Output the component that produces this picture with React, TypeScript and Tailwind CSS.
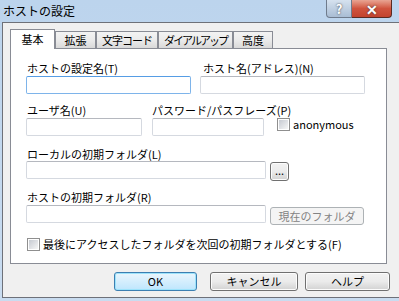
import React from "react";

const font = { fontFamily: '"Noto Sans CJK JP", "Liberation Sans", sans-serif' };

const tabs = [
  { label: "基本", w: "w-[45px]", t: "" },
  { label: "拡張", w: "w-[41px]", t: "" },
  { label: "文字コード", w: "w-[62px]", t: "tracking-[-1px]" },
  { label: "ダイアルアップ", w: "w-[75px]", t: "tracking-[-2px]" },
  { label: "高度", w: "w-[40px]", t: "" },
];

function Field({ className = "", focused = false }: { className?: string; focused?: boolean }) {
  return (
    <div
      className={
        "h-[18px] rounded-[2px] border bg-white " +
        (focused ? "border-[#7eb4ea] border-t-[#569de5]" : "border-[#d5d9e0] border-t-[#b5b8bf]") +
        " " +
        className
      }
    />
  );
}

function Check({ label }: { label: string }) {
  return (
    <div className="flex items-center gap-[3px] whitespace-nowrap">
      <div className="flex h-[13px] w-[13px] shrink-0 items-center justify-center border border-[#8f8f8f] bg-white">
        <div className="h-[9px] w-[9px] bg-gradient-to-br from-[#c6cad1] to-[#f6f6f6]" />
      </div>
      <span className="text-[11px] leading-[13px] text-black">{label}</span>
    </div>
  );
}

function Button({
  children,
  className = "",
  primary = false,
  disabled = false,
}: {
  children: React.ReactNode;
  className?: string;
  primary?: boolean;
  disabled?: boolean;
}) {
  return (
    <div
      className={
        "flex items-center justify-center whitespace-nowrap rounded-[3px] border text-[11px] " +
        (primary
          ? "border-[#3c7fb1] bg-gradient-to-b from-[#eaf6fd] to-[#bee6fd] text-black shadow-[inset_0_0_0_1px_#9de3fb] "
          : disabled
            ? "border-[#adb2b5] bg-[#f4f4f4] text-[#838383] "
            : "border-[#707070] bg-gradient-to-b from-[#f2f2f2] via-[#ebebeb] to-[#d2d2d2] text-black shadow-[inset_0_0_0_1px_#fcfcfc] ") +
        className
      }
    >
      {children}
    </div>
  );
}

export default function App() {
  return (
    <div
      className="flex h-[301px] w-[399px] flex-col overflow-hidden bg-gradient-to-b from-[#bcd4ed] to-[#c9dcf0]"
      style={font}
    >
      {/* title bar */}
      <div className="flex h-[22px] shrink-0 items-start justify-between">
        <span className="pl-[3px] pt-[3px] text-[12px] leading-[15px] text-black">ホストの設定</span>
        <div className="mr-[7px] flex">
          <div className="flex h-[18px] w-[26px] items-center justify-center rounded-bl-[4px] border border-t-0 border-[#6f7b8c] bg-gradient-to-b from-[#d6e2ef] to-[#a9bdd4] text-[13px] font-bold leading-none text-white [text-shadow:0_0_2px_#333]">
            ?
          </div>
          <div className="flex h-[18px] w-[40px] items-center justify-center rounded-br-[4px] border border-l-0 border-t-0 border-[#5a2a22] bg-gradient-to-b from-[#e8a493] via-[#d0533e] to-[#c2432e] text-[14px] font-bold leading-none text-white [text-shadow:0_0_2px_#333]">
            ✕
          </div>
        </div>
      </div>

      {/* client */}
      <div className="ml-[2px] flex h-[276px] flex-col border-b border-l border-t border-[#6e7179] bg-[#f0f0f0] pl-[7px]">
        {/* tabs */}
        <div className="mt-[7px] flex h-[18px] items-end">
          {tabs.map((t, i) =>
            i === 0 ? (
              <div
                key={t.label}
                className={
                  "relative z-10 -mb-px flex h-[20px] shrink-0 items-start justify-center border border-b-0 border-[#898c95] bg-white pt-[2px] text-[11px] leading-[14px] text-black " +
                  t.w
                }
              >
                {t.label}
              </div>
            ) : (
              <div
                key={t.label}
                className={
                  "flex h-[17px] min-w-0 shrink-0 items-center justify-center overflow-hidden whitespace-nowrap border border-b-0 border-[#898c95] bg-gradient-to-b from-[#f3f3f3] via-[#ebebeb] to-[#d9d9d9] text-[11px] leading-[14px] text-black " +
                  t.w +
                  " " +
                  t.t
                }
              >
                {t.label}
              </div>
            )
          )}
        </div>

        {/* panel */}
        <div className="flex h-[216px] w-[377px] flex-col whitespace-nowrap border border-[#898c95] bg-white pl-[15px] pt-[12px] text-[11px] leading-[14px] text-black">
          <div className="flex">
            <div className="w-[174px]">
              <div className="h-[15px] pl-[1px]">ホストの設定名(T)</div>
              <Field focused className="w-[165px]" />
            </div>
            <div className="w-[165px]">
              <div className="h-[15px] pl-[3px]">ホスト名(アドレス)(N)</div>
              <Field className="w-[165px]" />
            </div>
          </div>

          <div className="mt-[9px] flex">
            <div className="w-[126px]">
              <div className="h-[15px] pl-[1px]">ユーザ名(U)</div>
              <Field className="w-[116px]" />
            </div>
            <div className="w-[125px]">
              <div className="h-[15px]">パスワード/パスフレーズ(P)</div>
              <Field className="w-[112px]" />
            </div>
            <div className="pt-[15px]">
              <Check label="anonymous" />
            </div>
          </div>

          <div className="mt-[11px]">
            <div className="h-[14px] pl-[1px]">ローカルの初期フォルダ(L)</div>
            <div className="flex items-start gap-[4px]">
              <Field className="w-[240px]" />
              <Button className="mt-[1px] h-[19px] w-[19px] pb-[4px]">...</Button>
            </div>
          </div>

          <div className="mt-[9px]">
            <div className="h-[15px] pl-[1px]">ホストの初期フォルダ(R)</div>
            <div className="flex items-start gap-[4px]">
              <Field className="w-[240px]" />
              <Button disabled className="mt-[2px] h-[18px] w-[94px]">
                現在のフォルダ
              </Button>
            </div>
          </div>

          <div className="mt-[13px] pl-[1px]">
            <Check label="最後にアクセスしたフォルダを次回の初期フォルダとする(F)" />
          </div>
        </div>

        {/* buttons */}
        <div className="mt-[8px] flex pl-[104px]">
          <Button primary className="h-[19px] w-[83px]">
            OK
          </Button>
          <Button className="ml-[13px] h-[19px] w-[88px]">キャンセル</Button>
          <Button className="ml-[7px] h-[19px] w-[85px]">ヘルプ</Button>
        </div>
      </div>
    </div>
  );
}
